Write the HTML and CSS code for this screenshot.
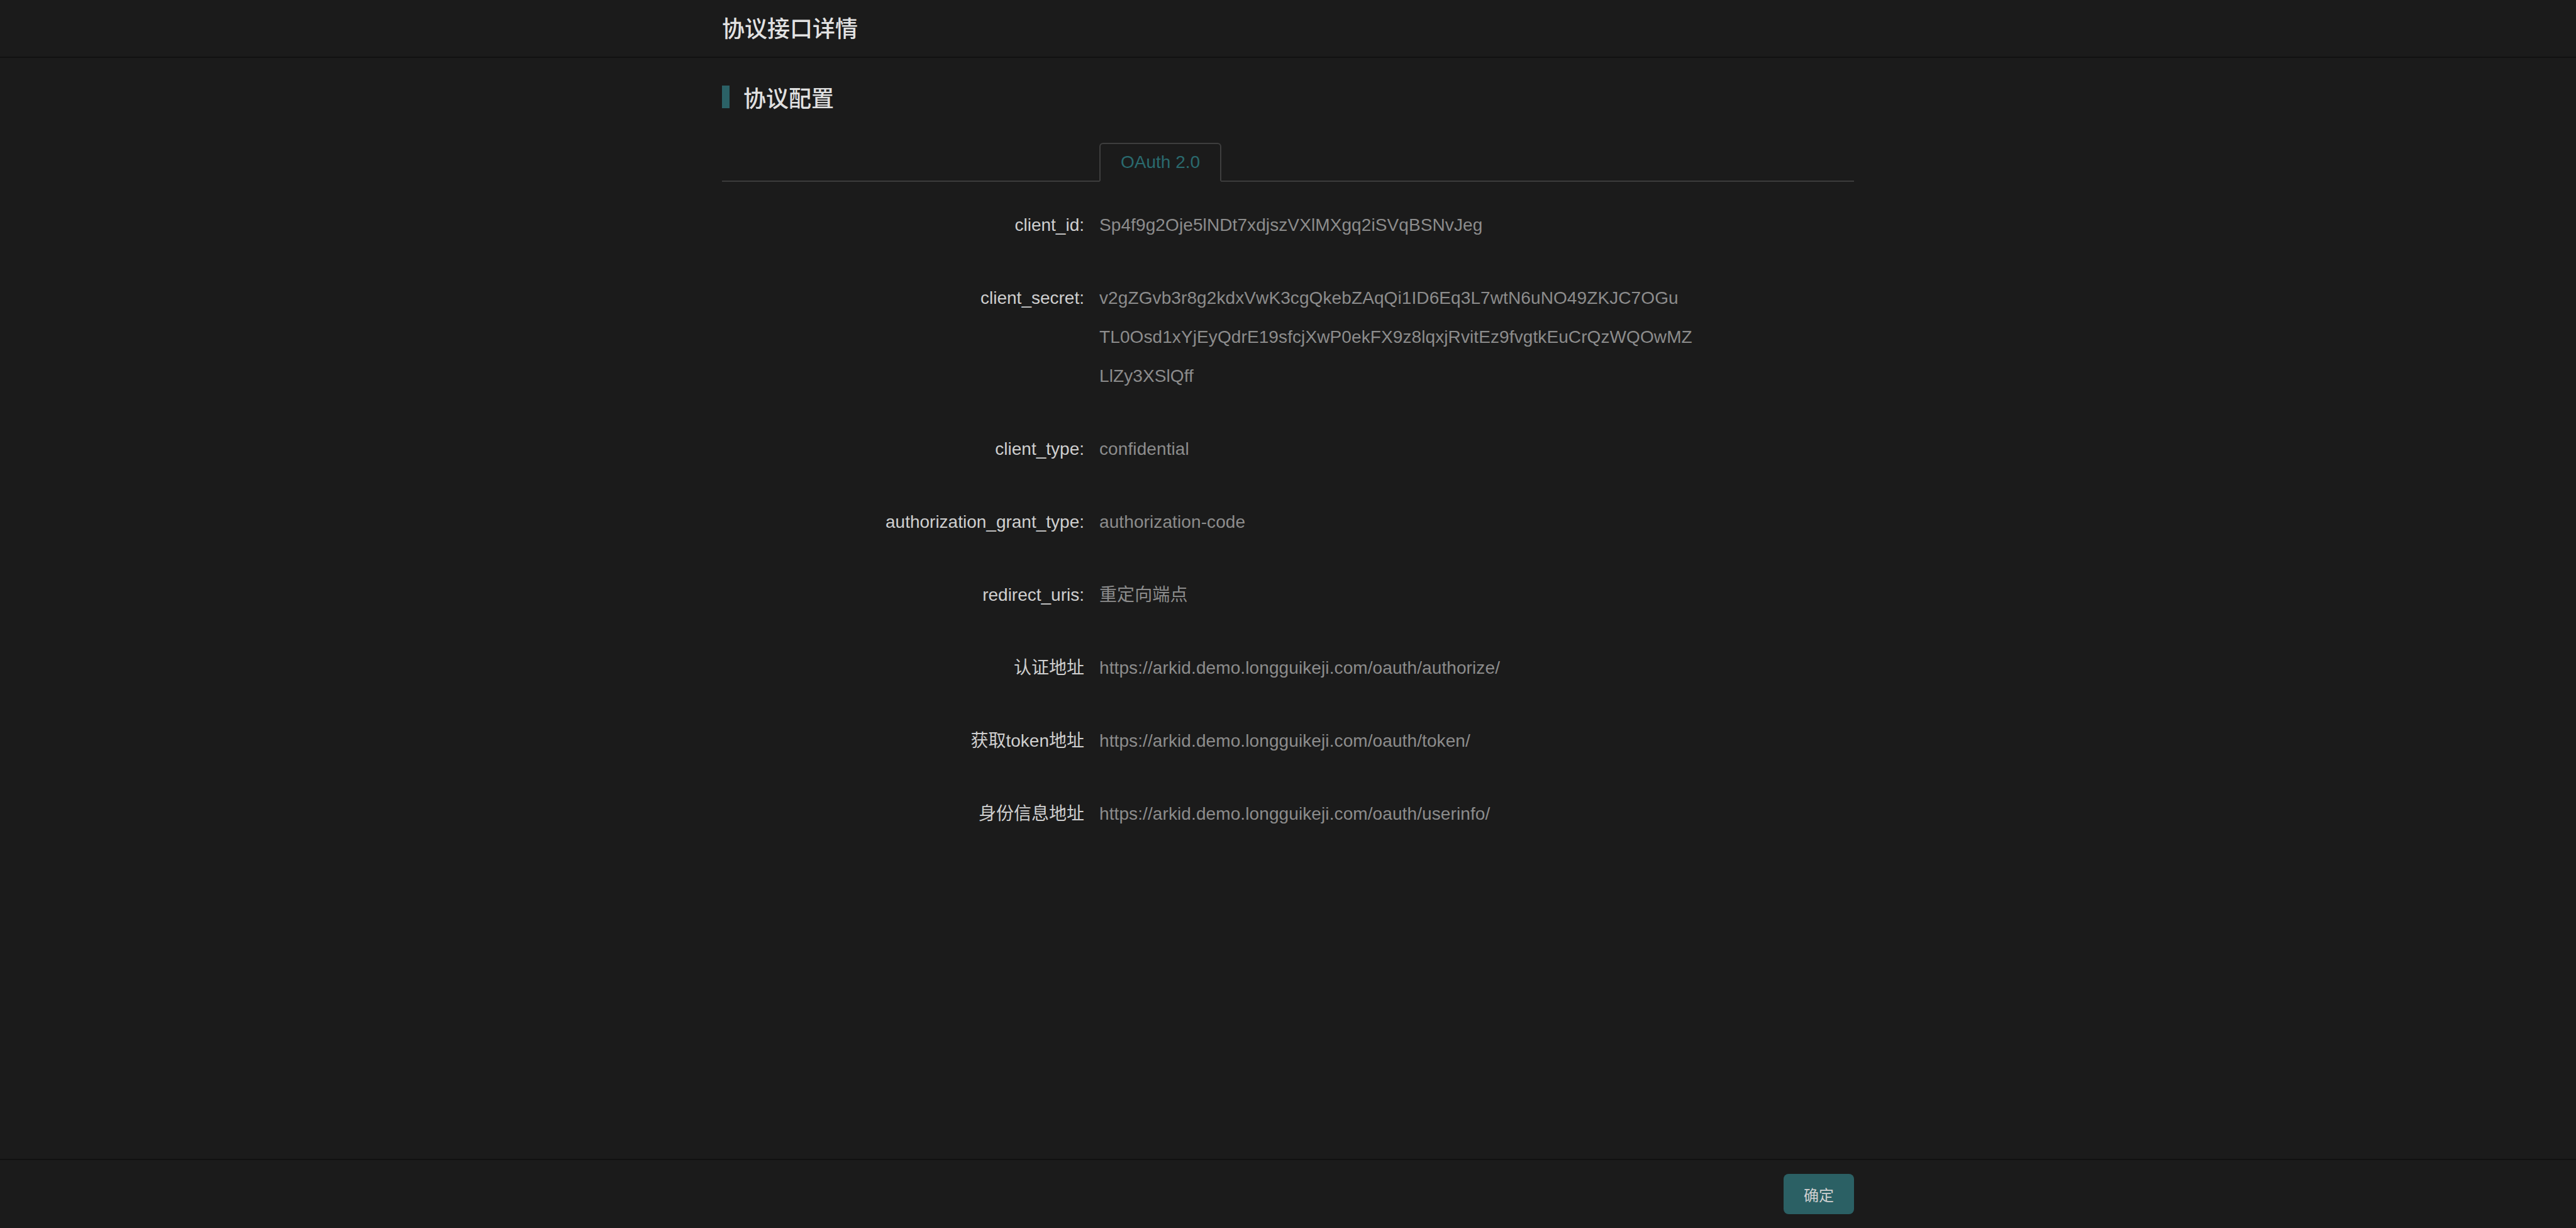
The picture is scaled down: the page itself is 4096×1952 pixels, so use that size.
FILE: index.html
```html
<!DOCTYPE html>
<html lang="zh-CN">
<head>
<meta charset="utf-8">
<title>协议接口详情</title>
<link rel="stylesheet" href="styles.css">
</head>
<body>
<div class="page">
  <header class="header">
    <div class="wrap header-inner">
      <h1 class="page-title">协议接口详情</h1>
    </div>
  </header>
  <main class="main">
    <div class="wrap">
      <div class="section-title">
        <span class="bar"></span>
        <span class="section-text">协议配置</span>
      </div>
      <div class="tabs">
        <div class="tab active">OAuth 2.0</div>
      </div>
      <div class="form">
        <div class="row">
          <div class="label">client_id:</div>
          <div class="value">Sp4f9g2Oje5lNDt7xdjszVXlMXgq2iSVqBSNvJeg</div>
        </div>
        <div class="row">
          <div class="label">client_secret:</div>
          <div class="value multi">
            <span class="line">v2gZGvb3r8g2kdxVwK3cgQkebZAqQi1ID6Eq3L7wtN6uNO49ZKJC7OGu</span>
            <span class="line">TL0Osd1xYjEyQdrE19sfcjXwP0ekFX9z8lqxjRvitEz9fvgtkEuCrQzWQOwMZ</span>
            <span class="line">LlZy3XSlQff</span>
          </div>
        </div>
        <div class="row">
          <div class="label">client_type:</div>
          <div class="value">confidential</div>
        </div>
        <div class="row">
          <div class="label">authorization_grant_type:</div>
          <div class="value">authorization-code</div>
        </div>
        <div class="row">
          <div class="label">redirect_uris:</div>
          <div class="value">重定向端点</div>
        </div>
        <div class="row">
          <div class="label">认证地址</div>
          <div class="value">https://arkid.demo.longguikeji.com/oauth/authorize/</div>
        </div>
        <div class="row">
          <div class="label">获取token地址</div>
          <div class="value">https://arkid.demo.longguikeji.com/oauth/token/</div>
        </div>
        <div class="row">
          <div class="label">身份信息地址</div>
          <div class="value">https://arkid.demo.longguikeji.com/oauth/userinfo/</div>
        </div>
      </div>
    </div>
  </main>
  <footer class="footer">
    <div class="wrap footer-inner">
      <button class="btn-primary" type="button">确定</button>
    </div>
  </footer>
</div>
</body>
</html>
```

FILE: styles.css
```css
* {
  box-sizing: border-box;
}

html, body {
  margin: 0;
  padding: 0;
  height: 100%;
}

body {
  background: #1b1b1b;
  font-family: "Liberation Sans", "Noto Sans CJK SC", sans-serif;
  color: #d0d0d0;
}

.page {
  display: flex;
  flex-direction: column;
  height: 100vh;
}

.wrap {
  width: 1800px;
  margin: 0 auto;
}

.header {
  height: 92px;
  border-bottom: 2px solid #111111;
  flex: none;
}

.header-inner {
  height: 90px;
  display: flex;
  align-items: center;
}

.page-title {
  margin: 0;
  font-size: 36px;
  font-weight: 500;
  color: #e2e2e2;
  line-height: 36px;
  position: relative;
  top: 2px;
}

.main {
  flex: 1;
}

.section-title {
  margin-top: 44px;
  display: flex;
  align-items: center;
  gap: 22px;
  height: 36px;
}

.bar {
  width: 12px;
  height: 36px;
  background: #2b6166;
}

.section-text {
  font-size: 36px;
  font-weight: 500;
  line-height: 36px;
  color: #e0e0e0;
  position: relative;
  top: 4px;
}

.tabs {
  margin-top: 55px;
  padding-left: 600px;
  display: flex;
  border-bottom: 2px solid #3c3c3c;
}

.tab {
  height: 62px;
  line-height: 58px;
  padding: 0 32px;
  font-size: 28px;
  border: 2px solid #3e3e3e;
  border-bottom: 2px solid #1b1b1b;
  border-radius: 6px 6px 0 0;
  margin-bottom: -2px;
}

.tab.active {
  color: #2a6a6e;
}

.form {
  margin-top: 38px;
  display: flex;
  flex-direction: column;
  gap: 54px;
}

.row {
  display: grid;
  grid-template-columns: 600px 1fr;
  font-size: 28px;
  line-height: 62px;
}

.label {
  text-align: right;
  padding-right: 24px;
  color: #cfcfcf;
}

.value {
  color: #8c8c8c;
  letter-spacing: 0.1px;
}

.multi {
  line-height: 62px;
}

.line {
  display: block;
}

.footer {
  flex: none;
  height: 110px;
  border-top: 2px solid #111111;
}

.footer-inner {
  height: 108px;
  display: flex;
  justify-content: flex-end;
  align-items: center;
}

.btn-primary {
  height: 64px;
  padding: 0 32px;
  background: #2b6064;
  color: #d0d0d0;
  border: none;
  border-radius: 8px;
  font-family: "Liberation Sans", "Noto Sans CJK SC", sans-serif;
  font-size: 24px;
}
```
